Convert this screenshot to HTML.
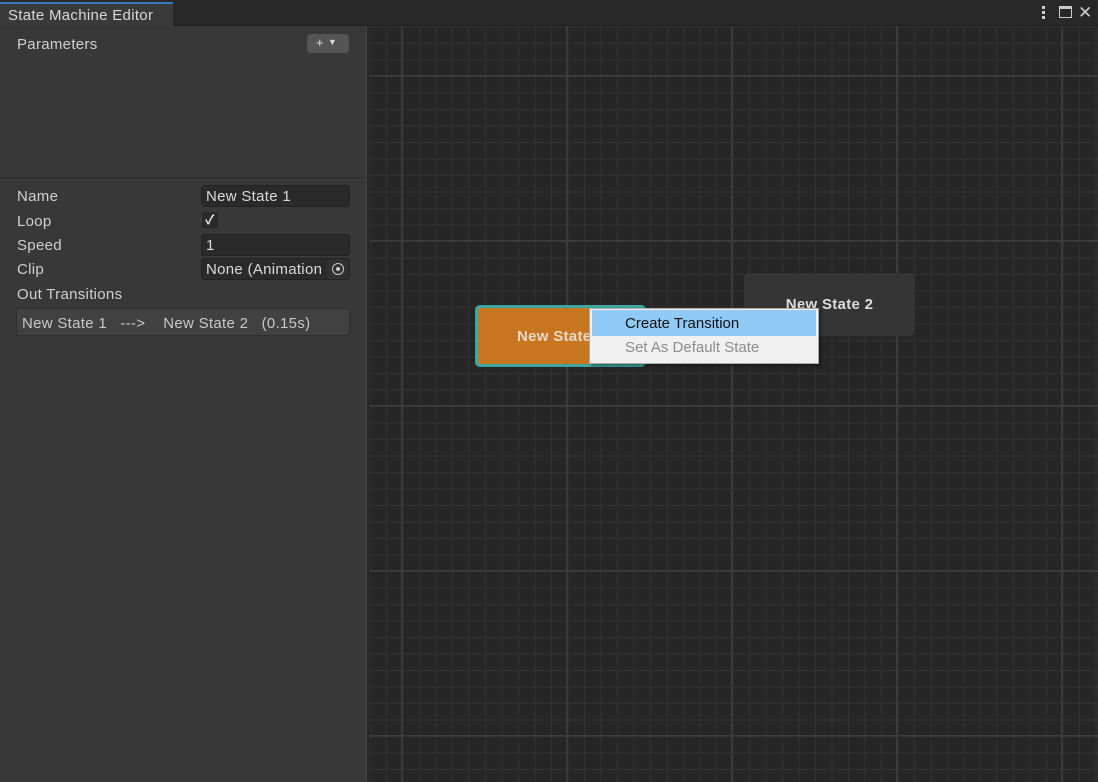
<!DOCTYPE html>
<html><head><style>
*{margin:0;padding:0;box-sizing:border-box}
body{width:1098px;height:782px;overflow:hidden;background:#282828;font-family:"Liberation Sans","Noto Sans CJK SC",sans-serif;position:relative;color:#d2d2d2;letter-spacing:0.3px}
.top{position:absolute;left:0;top:0;width:1098px;height:26px;background:#282828;border-bottom:1px solid #1e1e1e}
.tab{position:absolute;left:0;top:2px;width:173px;height:24px;background:#3a3a3a;border-top:2px solid #3a79bb;font-size:15px;color:#d8d8d8;padding:3px 0 0 8px}
.left{position:absolute;left:0;top:26px;width:366px;height:756px;background:#383838}
.sep{position:absolute;left:366px;top:26px;width:3px;height:756px;background:#262626;border-left:1px solid #454545}
.lbl{position:absolute;left:17px;font-size:15px;color:#d0d0d0}
.fld{position:absolute;left:201px;width:149px;height:22px;background:#2a2a2a;border:1px solid #222;border-radius:3px;font-size:15px;padding:2px 0 0 4px;color:#dadada}
.canvas{position:absolute;left:369px;top:26px;width:729px;height:756px;background-color:#262626;
background-image:
linear-gradient(#3d3d3d 1.5px,transparent 1.5px),
linear-gradient(90deg,#3d3d3d 1.5px,transparent 1.5px),
linear-gradient(#313131 1px,transparent 1px),
linear-gradient(90deg,#313131 1px,transparent 1px);
background-size:165px 165px,165px 165px,16.5px 16.5px,16.5px 16.5px;
background-position:0 49px,32px 0,0 0.5px,0.5px 0}
</style></head><body>
<div class="top"><div class="tab">State Machine Editor</div>
<div style="position:absolute;left:1042px;top:6px;width:3px;height:14px">
<div style="width:3px;height:3px;background:#ccc;margin-bottom:2px"></div><div style="width:3px;height:3px;background:#ccc;margin-bottom:2px"></div><div style="width:3px;height:3px;background:#ccc"></div></div>
<div style="position:absolute;left:1059px;top:6px;width:13px;height:12px;border:1.5px solid #ccc;border-top-width:3px"></div>
<div style="position:absolute;left:1078px;top:3px;font-size:17px;color:#ccc">✕</div>
</div>
<div class="left">
<div class="lbl" style="top:10px">Parameters</div>
<div style="position:absolute;left:307px;top:8px;width:42px;height:19px;background:#555;border-radius:4px;color:#ddd;font-size:13px;padding:1px 0 0 9px">+ <span style="font-size:9px;vertical-align:2px">▼</span></div>
<div style="position:absolute;left:0;top:152px;width:366px;height:1px;background:#2a2a2a"></div>
<div style="position:absolute;left:0;top:153px;width:366px;height:1px;background:#444"></div>
</div>
<div class="lbl" style="top:188px">Name</div>
<div class="fld" style="top:185px">New State 1</div>
<div class="lbl" style="top:213px">Loop</div>
<div style="position:absolute;left:202px;top:212px;width:16px;height:16px;background:#2a2a2a;border-radius:2px;color:#eee;font-size:13px;text-align:center;line-height:16px;font-weight:bold">✓</div>
<div class="lbl" style="top:237px">Speed</div>
<div class="fld" style="top:234px">1</div>
<div class="lbl" style="top:261px">Clip</div>
<div class="fld" style="top:258px;overflow:hidden;white-space:nowrap">None (Animation<span style="position:absolute;right:0;top:0;width:22px;height:20px;background:#303030;text-align:center"><span style="display:inline-block;width:12px;height:12px;border:1.5px solid #ccc;border-radius:50%;margin-top:4px;position:relative"><span style="position:absolute;left:2.5px;top:2.5px;width:4px;height:4px;background:#ccc;border-radius:50%"></span></span></span></div>
<div class="lbl" style="top:286px">Out Transitions</div>
<div style="position:absolute;left:16px;top:308px;width:334px;height:28px;background:#414141;border:1px solid #2e2e2e;border-radius:3px;font-size:15px;color:#c8c8c8;padding:6px 0 0 5px;white-space:pre">New State 1   --->    New State 2   (0.15s)</div>
<div class="sep"></div>
<div class="canvas"></div>
<div style="position:absolute;left:744px;top:273px;width:171px;height:63px;background:#353535;border-radius:5px;color:#ddd;font-size:15px;font-weight:bold;text-align:center;padding-top:23px">New State 2</div>
<div style="position:absolute;left:475px;top:305px;width:171px;height:62px;background:#c97620;border:3px solid #3ea6a0;border-radius:5px;color:#e8d8c8;font-size:15px;font-weight:bold;padding:20px 0 0 39px;white-space:nowrap;overflow:hidden">New State 1</div>
<div style="position:absolute;left:589px;top:308px;width:230px;height:56px;background:#f0f0f0;border:1px solid #aaa;box-shadow:2px 2px 3px rgba(0,0,0,.4);letter-spacing:0">
<div style="margin:1px 2px 0 2px;height:26px;background:#91c9f7;color:#111;font-size:15px;padding:5px 0 0 33px">Create Transition</div>
<div style="color:#8d8d8d;font-size:15px;padding:3px 0 0 35px">Set As Default State</div>
</div>
</body></html>
